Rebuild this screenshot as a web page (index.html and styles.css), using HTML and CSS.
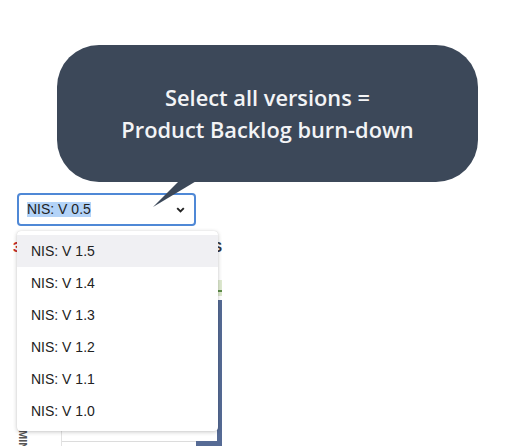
FILE: index.html
```html
<!DOCTYPE html>
<html>
<head>
<meta charset="utf-8">
<link rel="stylesheet" href="styles.css">
</head>
<body>
<div class="page">
  <div class="select">
    <span class="select-value">NIS: V 0.5</span>
    <svg class="chev" width="9" height="6" viewBox="0 0 9 6"><path d="M1.2 1.2 L4.5 4.5 L7.8 1.2" fill="none" stroke="#222" stroke-width="1.9"/></svg>
  </div>
  <div class="heading"><span class="num">3</span><span class="title">VERSIONS</span></div>
  <div class="chart-head"><div class="chart-line"></div></div>
  <div class="chart">
    <div class="axis"><span class="axis-label">MINUTES</span></div>
    <div class="plot">
      <div class="bar bar-narrow"></div>
      <div class="grid-row"><div class="grid-line"></div><div class="bar-wide"></div></div>
    </div>
  </div>
</div>

<div class="bubble">
  <p>Select all versions =<br>Product Backlog burn-down</p>
</div>
<svg class="tail" width="60" height="40" viewBox="0 0 60 40"><polygon points="30,0 48,0 3,27" fill="#3c4859"/></svg>

<ul class="menu">
  <li class="active">NIS: V 1.5</li>
  <li>NIS: V 1.4</li>
  <li>NIS: V 1.3</li>
  <li>NIS: V 1.2</li>
  <li>NIS: V 1.1</li>
  <li>NIS: V 1.0</li>
</ul>
</body>
</html>
```

FILE: styles.css
```css
html, body {
  margin: 0;
  padding: 0;
  background: #ffffff;
  font-family: "Liberation Sans", Arial, sans-serif;
  overflow: hidden;
}

.page {
  padding: 193px 0 0 13px;
  width: 209px;
  height: 253px;
}

.select {
  margin-left: 4px;
  width: 179px;
  height: 33px;
  box-sizing: border-box;
  border: 2px solid #4f88d6;
  border-radius: 4px;
  display: flex;
  align-items: center;
  justify-content: space-between;
  padding: 0 9px 0 8px;
  font-size: 14px;
  color: #222;
  background: #fff;
}

.select-value {
  background: #b3d3f8;
  line-height: 15px;
}

.chev { display: block; margin-top: 1px; }

.heading {
  margin-top: 11px;
  height: 20px;
  display: flex;
  justify-content: space-between;
  align-items: center;
  font-size: 14px;
  font-weight: bold;
  color: #2d3340;
}

.num { color: #c62b2b; }

.chart-head {
  margin-top: 23px;
  margin-left: 49px;
  height: 16px;
  background: #dfead0;
  display: flex;
  flex-direction: column;
  justify-content: flex-end;
  padding-bottom: 4px;
  box-sizing: border-box;
}

.chart-line { height: 2px; background: #5f8d49; }

.chart {
  margin-top: 4px;
  height: 146px;
  display: grid;
  grid-template-columns: 49px 1fr;
  overflow: hidden;
}

.axis {
  border-right: 1px solid #e2e2e2;
  padding-left: 4px;
  padding-top: 130px;
  overflow: hidden;
}

.axis-label {
  display: block;
  writing-mode: vertical-rl;
  font-size: 11px;
  font-weight: bold;
  color: #555;
}

.plot {
  display: flex;
  flex-direction: column;
  justify-content: flex-end;
  position: relative;
  overflow: hidden;
}

.bar-narrow {
  position: absolute;
  right: 0;
  top: 0;
  bottom: 0;
  width: 5px;
  background: #566b95;
}

.grid-row {
  display: flex;
  align-items: flex-start;
  height: 5px;
}

.grid-line {
  flex: 1;
  height: 1px;
  background: #dcdcdc;
}

.bar-wide {
  width: 26px;
  height: 5px;
  background: #566b95;
}

.bubble {
  position: absolute;
  left: 57px;
  top: 45px;
  width: 421px;
  height: 137px;
  background: #3c4859;
  border-radius: 42px;
  display: flex;
  align-items: center;
  justify-content: center;
}

.bubble p {
  margin: 0;
  color: #f3f4f6;
  font-family: "Open Sans", "DejaVu Sans", sans-serif;
  font-weight: 600;
  font-size: 21.8px;
  line-height: 32px;
  text-align: center;
  padding-top: 1px;
}

.tail {
  position: absolute;
  left: 150px;
  top: 180px;
}

.menu {
  position: absolute;
  left: 17px;
  top: 231px;
  width: 201px;
  margin: 0;
  padding: 4px 0;
  list-style: none;
  background: #fff;
  border-radius: 4px;
  box-shadow: 0 1px 4px rgba(0, 0, 0, 0.22), 0 0 1px rgba(0, 0, 0, 0.15);
  font-size: 14px;
  color: #222;
}

.menu li {
  height: 32px;
  line-height: 32px;
  padding-left: 14px;
}

.menu li.active { background: #f0f0f3; }
```
